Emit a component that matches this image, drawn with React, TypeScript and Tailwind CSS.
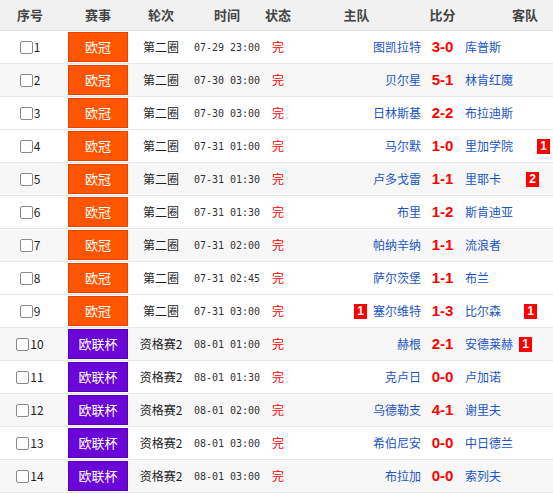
type Match = {
  id: number;
  league: '欧冠' | '欧联杯';
  round: string;
  time: string;
  home: string;
  score: string;
  away: string;
  homeCard?: number;
  awayCard?: number;
  cardGap?: string;
};

const matches: Match[] = [
  { id: 1, league: '欧冠', round: '第二圈', time: '07-29 23:00', home: '图凯拉特', score: '3-0', away: '库普斯' },
  { id: 2, league: '欧冠', round: '第二圈', time: '07-30 03:00', home: '贝尔星', score: '5-1', away: '林肯红魔' },
  { id: 3, league: '欧冠', round: '第二圈', time: '07-30 03:00', home: '日林斯基', score: '2-2', away: '布拉迪斯' },
  { id: 4, league: '欧冠', round: '第二圈', time: '07-31 01:00', home: '马尔默', score: '1-0', away: '里加学院', awayCard: 1, cardGap: 'ml-[24px]' },
  { id: 5, league: '欧冠', round: '第二圈', time: '07-31 01:30', home: '卢多戈雷', score: '1-1', away: '里耶卡', awayCard: 2, cardGap: 'ml-[25px]' },
  { id: 6, league: '欧冠', round: '第二圈', time: '07-31 01:30', home: '布里', score: '1-2', away: '斯肯迪亚' },
  { id: 7, league: '欧冠', round: '第二圈', time: '07-31 02:00', home: '帕纳辛纳', score: '1-1', away: '流浪者' },
  { id: 8, league: '欧冠', round: '第二圈', time: '07-31 02:45', home: '萨尔茨堡', score: '1-1', away: '布兰' },
  { id: 9, league: '欧冠', round: '第二圈', time: '07-31 03:00', home: '塞尔维特', score: '1-3', away: '比尔森', homeCard: 1, awayCard: 1, cardGap: 'ml-[23px]' },
  { id: 10, league: '欧联杯', round: '资格赛2', time: '08-01 01:00', home: '赫根', score: '2-1', away: '安德莱赫', awayCard: 1, cardGap: 'ml-[6px]' },
  { id: 11, league: '欧联杯', round: '资格赛2', time: '08-01 01:30', home: '克卢日', score: '0-0', away: '卢加诺' },
  { id: 12, league: '欧联杯', round: '资格赛2', time: '08-01 02:00', home: '乌德勒支', score: '4-1', away: '谢里夫' },
  { id: 13, league: '欧联杯', round: '资格赛2', time: '08-01 03:00', home: '希伯尼安', score: '0-0', away: '中日德兰' },
  { id: 14, league: '欧联杯', round: '资格赛2', time: '08-01 03:00', home: '布拉加', score: '0-0', away: '索列夫' },
];

function RedCard({ n, className = '' }: { n: number; className?: string }) {
  return (
    <span
      className={`inline-flex shrink-0 items-center justify-center w-[13px] h-[15px] bg-[#f00] text-white text-[12px] leading-none font-bold font-['Liberation_Sans',sans-serif] ${className}`}
    >
      {n}
    </span>
  );
}

export default function App() {
  return (
    <div className="w-[553px] h-[493px] overflow-hidden bg-white font-['Noto_Sans_CJK_SC',sans-serif] text-[12px] text-[#222]">
      <div className="w-[600px]">
        {/* Header */}
        <div className="flex h-[31px] items-center bg-[#f1f1f1] border-b border-[#e3e3e3] text-[13px] font-bold text-[#444] whitespace-nowrap">
          <div className="w-[60px] flex justify-center">序号</div>
          <div className="w-[76px] flex justify-center">赛事</div>
          <div className="w-[50px] flex justify-center">轮次</div>
          <div className="w-[82px] flex justify-center">时间</div>
          <div className="w-[20px] flex justify-center">状态</div>
          <div className="w-[137px] flex justify-center">主队</div>
          <div className="w-[35px] flex justify-center">比分</div>
          <div className="w-[130px] flex justify-center">客队</div>
        </div>

        {/* Rows */}
        {matches.map((m) => (
          <div
            key={m.id}
            className={`flex h-[33px] items-center border-b border-[#e6e6e6] whitespace-nowrap ${
              [2, 5, 7, 10, 12, 14].includes(m.id) ? 'bg-[#f7f7f7]' : 'bg-white'
            }`}
          >
            <div className="w-[60px] flex items-center justify-center">
              <span className="w-[13px] h-[13px] rounded-[2px] border border-[#8a8a8a] bg-white" />
              <span className="ml-px">{m.id}</span>
            </div>
            <div className="w-[76px] flex justify-center">
              <div
                className={`w-[60px] h-[30px] flex items-center justify-center text-white text-[13px] border ${
                  m.league === '欧冠'
                    ? 'bg-[#ff5500] border-[#e04600]'
                    : 'bg-[#6a06d8] border-[#5600b8]'
                }`}
              >
                {m.league}
              </div>
            </div>
            <div className="w-[50px] flex justify-center">{m.round}</div>
            <div className="w-[82px] flex justify-center text-[10px] text-[#333] font-['DejaVu_Sans_Mono',monospace]">
              {m.time}
            </div>
            <div className="w-[20px] flex justify-center text-[#f00]">完</div>
            <div className="w-[137px] flex items-center justify-end pr-[4px] text-[#1a55c4]">
              {m.homeCard && <RedCard n={m.homeCard} className="mr-[6px]" />}
              {m.home}
            </div>
            <div className="w-[35px] flex justify-center text-[15px] font-bold text-[#f00] font-['Liberation_Sans',sans-serif]">
              {m.score}
            </div>
            <div className="w-[130px] flex items-center pl-[5px] text-[#1a55c4]">
              {m.away}
              {m.awayCard && <RedCard n={m.awayCard} className={m.cardGap} />}
            </div>
          </div>
        ))}
      </div>
    </div>
  );
}
